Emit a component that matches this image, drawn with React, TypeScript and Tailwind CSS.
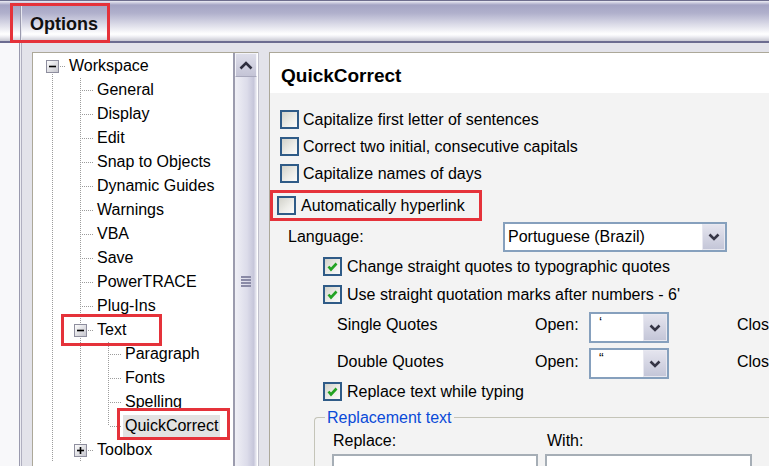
import React from 'react';

type GuideType = 'pipe' | 'tee' | 'ell' | 'first' | 'blank';
type G = { t: GuideType; box?: 'minus' | 'plus' };

const DOT = { stroke: '#9c9c9c', strokeWidth: 1, strokeDasharray: '1 1' };

function Guide({ t, box }: G) {
  const c = 14.5;
  return (
    <svg width="28" height="24" className="shrink-0 block">
      {(t === 'pipe' || t === 'tee') && <line x1={c} y1={0} x2={c} y2={24} {...DOT} />}
      {t === 'ell' && <line x1={c} y1={0} x2={c} y2={12} {...DOT} />}
      {t === 'first' && <line x1={c} y1={12} x2={c} y2={24} {...DOT} />}
      {(t === 'tee' || t === 'ell' || t === 'first') && (
        <line x1={16} y1={12.5} x2={27} y2={12.5} {...DOT} />
      )}
      {box && (
        <g>
          <defs>
            <linearGradient id="bx" x1="0" y1="0" x2="1" y2="1">
              <stop offset="0" stopColor="#ffffff" />
              <stop offset="1" stopColor="#c4c4cc" />
            </linearGradient>
          </defs>
          <rect x={8.5} y={6.5} width={12} height={12} fill="url(#bx)" stroke="#8e8e9e" />
          <line x1={11} y1={12.5} x2={18} y2={12.5} stroke="#000" strokeWidth={1.6} />
          {box === 'plus' && <line x1={14.5} y1={9} x2={14.5} y2={16} stroke="#000" strokeWidth={1.6} />}
        </g>
      )}
    </svg>
  );
}

const rows: { label: string; g: G[]; sel?: boolean }[] = [
  { label: 'Workspace', g: [{ t: 'first', box: 'minus' }] },
  { label: 'General', g: [{ t: 'pipe' }, { t: 'tee' }] },
  { label: 'Display', g: [{ t: 'pipe' }, { t: 'tee' }] },
  { label: 'Edit', g: [{ t: 'pipe' }, { t: 'tee' }] },
  { label: 'Snap to Objects', g: [{ t: 'pipe' }, { t: 'tee' }] },
  { label: 'Dynamic Guides', g: [{ t: 'pipe' }, { t: 'tee' }] },
  { label: 'Warnings', g: [{ t: 'pipe' }, { t: 'tee' }] },
  { label: 'VBA', g: [{ t: 'pipe' }, { t: 'tee' }] },
  { label: 'Save', g: [{ t: 'pipe' }, { t: 'tee' }] },
  { label: 'PowerTRACE', g: [{ t: 'pipe' }, { t: 'tee' }] },
  { label: 'Plug-Ins', g: [{ t: 'pipe' }, { t: 'tee' }] },
  { label: 'Text', g: [{ t: 'pipe' }, { t: 'tee', box: 'minus' }] },
  { label: 'Paragraph', g: [{ t: 'pipe' }, { t: 'pipe' }, { t: 'tee' }] },
  { label: 'Fonts', g: [{ t: 'pipe' }, { t: 'pipe' }, { t: 'tee' }] },
  { label: 'Spelling', g: [{ t: 'pipe' }, { t: 'pipe' }, { t: 'tee' }] },
  { label: 'QuickCorrect', g: [{ t: 'pipe' }, { t: 'pipe' }, { t: 'ell' }], sel: true },
  { label: 'Toolbox', g: [{ t: 'pipe' }, { t: 'tee', box: 'plus' }] },
];

function Check({ checked }: { checked?: boolean }) {
  return (
    <div className="w-[19px] h-[19px] shrink-0 border-2 border-[#2f5b87] bg-[linear-gradient(135deg,#d2d2ca,#eeeeea_60%,#fbfbfb)] flex items-center justify-center">
      {checked && (
        <svg width="11" height="10" viewBox="0 0 11 10">
          <path d="M1.5 4.5 L4 7.5 L9.5 1.5" fill="none" stroke="#22a322" strokeWidth="2.6" />
        </svg>
      )}
    </div>
  );
}

function Chevron() {
  return (
    <svg width="12" height="8" viewBox="0 0 12 8">
      <path d="M1.5 1.5 L6 6 L10.5 1.5" fill="none" stroke="#353545" strokeWidth="2.6" />
    </svg>
  );
}

function Select({ w, h, value }: { w: string; h: string; value: string }) {
  return (
    <div className={`${w} ${h} shrink-0 flex border-2 border-[#86a0bd] bg-white`}>
      <div className="flex-1 pl-[3px] flex items-center whitespace-nowrap overflow-hidden">{value}</div>
      <div className="w-[23px] border border-[#e8e8f0] bg-[linear-gradient(to_bottom,#e4e4ee,#c4c6d8)] flex items-center justify-center">
        <Chevron />
      </div>
    </div>
  );
}

function QuoteSelect({ value }: { value: string }) {
  return (
    <div className="w-[80px] h-[31px] shrink-0 flex border-2 border-[#86a0bd] bg-white">
      <div className="flex-1 pl-[8px] pt-[1px] text-[14px] leading-[14px]">{value}</div>
      <div className="w-[24px] border border-[#e8e8f0] bg-[linear-gradient(to_bottom,#e4e4ee,#c4c6d8)] flex items-center justify-center">
        <Chevron />
      </div>
    </div>
  );
}

export default function App() {
  return (
    <div className="w-[769px] h-[466px] overflow-hidden relative bg-white text-black text-[16px] font-['Liberation_Sans',Arial,sans-serif] flex flex-col">
      {/* Title bar */}
      <div className="h-[43px] shrink-0 flex border-t border-b-2 border-t-[#6e6e8e] border-b-[#6c6c90] bg-[linear-gradient(to_bottom,#ececf4_0px,#a4a4c4_4px,#b0b0cc_12px,#ffffff_33px,#f4f4f8_35px,#c8c8d2_40px)]">
        <div className="w-[20px] shrink-0" />
        <div className="w-[2px] mt-[5px] border-l border-[#9a9aae] border-r border-r-[#e8e8f0]" />
        <div className="pl-[8px] pt-[10px] font-bold text-[18px] leading-[27px] text-[#111]">Options</div>
      </div>

      {/* Body */}
      <div className="flex-1 flex min-h-0">
        <div className="w-[19px] shrink-0 bg-[#f8f8fa]" />
        <div className="w-[3px] shrink-0 border-l border-[#9a9aae] border-r border-r-[#b0b0c0] bg-[#ececf2]" />
        <div className="flex-1 flex flex-col min-w-0">
          <div className="h-[9px] shrink-0 bg-[#e3e3ea]" />
          <div className="flex-1 flex min-h-0">
            <div className="w-[10px] shrink-0 bg-[#e3e3ea]" />
            {/* Tree panel */}
            <div className="flex border-t border-l border-[#aca899]">
              <div className="w-[200px] bg-white pl-[5px] pt-[1px] flex flex-col overflow-hidden">
                {rows.map((r) => (
                  <div key={r.label} className="flex h-[24px] items-center shrink-0">
                    {r.g.map((g, i) => (
                      <Guide key={i} t={g.t} box={g.box} />
                    ))}
                    <span
                      className={`ml-[1px] px-[2px] h-[23px] flex items-center whitespace-nowrap ${
                        r.sel ? 'bg-[#e2e2e2]' : ''
                      }`}
                    >
                      {r.label}
                    </span>
                  </div>
                ))}
              </div>
              {/* Scrollbar */}
              <div className="w-[25px] flex flex-col border-l-2 border-[#9c9cae] border-r border-r-white">
                <div className="h-[24px] shrink-0 border border-[#f4f4fa] border-b-[#a8a8bc] bg-[linear-gradient(to_bottom,#dedeea,#c4c4d6)] flex items-center justify-center">
                  <svg width="14" height="9" viewBox="0 0 14 9">
                    <path d="M1.5 7.5 L7 2 L12.5 7.5" fill="none" stroke="#2e2e3e" strokeWidth="2.6" />
                  </svg>
                </div>
                <div className="flex-1 bg-[linear-gradient(to_right,#f0f0f6,#dcdcea_55%,#c6c6da_85%,#f4f4f8)] flex flex-col items-center pt-[199px]">
                  <div className="flex flex-col gap-[1px]">
                    <div className="w-[10px] h-[2px] bg-[#8a8aa6]" />
                    <div className="w-[10px] h-[2px] bg-[#8a8aa6]" />
                    <div className="w-[10px] h-[2px] bg-[#8a8aa6]" />
                    <div className="w-[10px] h-[2px] bg-[#8a8aa6]" />
                  </div>
                </div>
              </div>
            </div>
            <div className="w-[11px] shrink-0 bg-[#e3e3ea] border-l border-[#c0c0cc]" />
            {/* Content panel */}
            <div className="flex-1 flex flex-col border-t border-l border-[#aca899] min-w-0 overflow-hidden">
              <div className="h-[40px] shrink-0 bg-white pl-[11px] pt-[7px] flex items-center font-bold text-[19px]">
                QuickCorrect
              </div>
              <div className="flex-1 bg-[#f3f3f3] pl-[10px] pt-[17px] flex flex-col">
                <div className="flex items-center h-[19px] gap-[4px]">
                  <Check />
                  <span>Capitalize first letter of sentences</span>
                </div>
                <div className="flex items-center h-[19px] gap-[4px] mt-[8px]">
                  <Check />
                  <span>Correct two initial, consecutive capitals</span>
                </div>
                <div className="flex items-center h-[19px] gap-[4px] mt-[8px]">
                  <Check />
                  <span>Capitalize names of days</span>
                </div>
                <div className="flex items-center h-[19px] gap-[5px] mt-[13px] -ml-[3px]">
                  <Check />
                  <span>Automatically hyperlink</span>
                </div>
                <div className="flex items-center h-[30px] mt-[7px]">
                  <span className="ml-[8px] w-[215px] shrink-0">Language:</span>
                  <Select w="w-[224px]" h="h-[30px]" value="Portuguese (Brazil)" />
                </div>
                <div className="flex items-center h-[19px] gap-[5px] mt-[5px] ml-[43px]">
                  <Check checked />
                  <span className="whitespace-nowrap">Change straight quotes to typographic quotes</span>
                </div>
                <div className="flex items-center h-[19px] gap-[5px] mt-[9px] ml-[43px]">
                  <Check checked />
                  <span className="whitespace-nowrap">Use straight quotation marks after numbers - 6'</span>
                </div>
                <div className="flex items-center h-[31px] mt-[8px] whitespace-nowrap">
                  <span className="ml-[57px] w-[198px] shrink-0 -mt-[6px]">Single Quotes</span>
                  <span className="w-[54px] shrink-0 -mt-[6px]">Open:</span>
                  <QuoteSelect value="‘" />
                  <span className="ml-[68px] -mt-[6px]">Close:</span>
                </div>
                <div className="flex items-center h-[31px] mt-[5px] whitespace-nowrap">
                  <span className="ml-[57px] w-[198px] shrink-0 -mt-[3px]">Double Quotes</span>
                  <span className="w-[54px] shrink-0 -mt-[3px]">Open:</span>
                  <QuoteSelect value="“" />
                  <span className="ml-[68px] -mt-[3px]">Close:</span>
                </div>
                <div className="flex items-center h-[19px] gap-[5px] mt-[3px] ml-[43px]">
                  <Check checked />
                  <span>Replace text while typing</span>
                </div>
                {/* Group */}
                <div className="mt-[8px] ml-[34px] flex flex-col">
                  <div className="flex items-start h-[18px]">
                    <div className="w-[11px] h-[10px] mt-[8px] border-l border-t border-[#c4c4b8] rounded-tl-[4px] shrink-0" />
                    <span className="px-[2px] text-[#0a4ad8] leading-[18px] whitespace-nowrap">Replacement text</span>
                    <div className="flex-1 h-px mt-[8px] bg-[#c4c4b8]" />
                  </div>
                  <div className="flex-1 border-l border-[#c4c4b8] pl-[17px] pt-[5px] flex gap-[7px]">
                    <div className="flex flex-col w-[206px] shrink-0">
                      <span className="pl-[1px] h-[18px] leading-[18px]">Replace:</span>
                      <div className="mt-[4px] h-[40px] border-2 border-[#a6aeb6] bg-white" />
                    </div>
                    <div className="flex flex-col w-[207px] shrink-0">
                      <span className="pl-[2px] h-[18px] leading-[18px]">With:</span>
                      <div className="mt-[4px] h-[40px] border-2 border-[#a6aeb6] bg-white" />
                    </div>
                  </div>
                </div>
              </div>
            </div>
          </div>
        </div>
      </div>

      {/* Red annotation boxes */}
      <div className="absolute left-[10px] top-[3px] w-[100px] h-[40px] border-[3px] border-[#e5323a] pointer-events-none" />
      <div className="absolute left-[270px] top-[190px] w-[212px] h-[31px] border-[3px] border-[#e5323a] pointer-events-none" />
      <div className="absolute left-[61px] top-[314px] w-[101px] h-[32px] border-[3px] border-[#e5323a] pointer-events-none" />
      <div className="absolute left-[117px] top-[408px] w-[113px] h-[32px] border-[3px] border-[#e5323a] pointer-events-none" />
    </div>
  );
}
